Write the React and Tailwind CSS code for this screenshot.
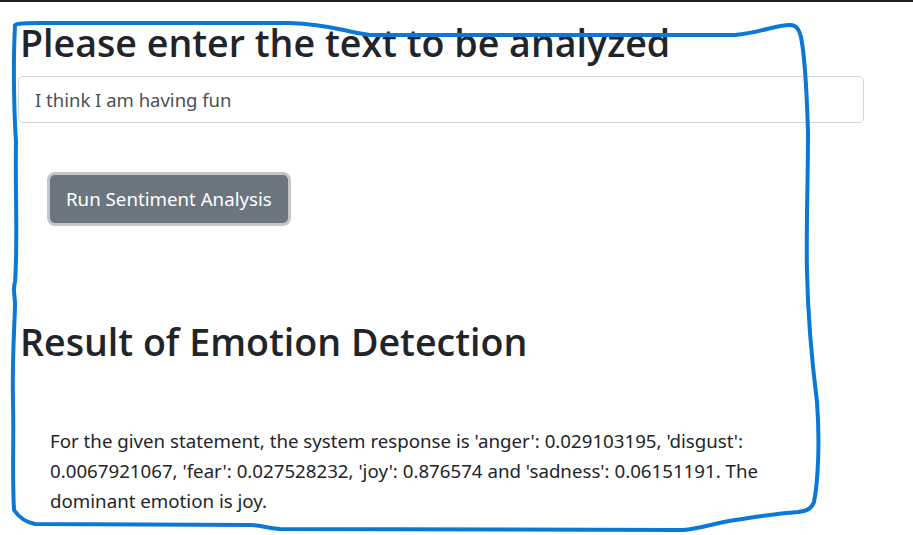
export default function App() {
    return (
        <div className="relative min-h-screen overflow-hidden bg-white border-t-2 border-[#1e1e1e] font-['Noto_Sans',sans-serif] text-[#212529]">
            <div className="px-[18px]">
                <h1 className="pt-[18px] pl-[2px] font-['Open_Sans',sans-serif] text-[37.6px] font-[550] leading-[46px]">
                    Please enter the text to be analyzed
                </h1>
                <input
                    type="text"
                    defaultValue="I think I am having fun"
                    className="mt-[10px] block h-[47px] w-[846px] rounded-[5px] border border-[#ced4da] px-[16px] text-[18.5px] text-[#495057] outline-none"
                />
                <div className="pt-[52px] pl-[32px]">
                    <button className="h-[48px] rounded-[5px] bg-[#6c757d] px-[16px] text-[18.7px] text-white ring-[3px] ring-[#c3c7cb]">
                        Run Sentiment Analysis
                    </button>
                </div>
                <h2 className="mt-[96px] pl-[2px] font-['Open_Sans',sans-serif] text-[37.6px] font-[550] leading-[46px]">
                    Result of Emotion Detection
                </h2>
                <p className="mt-[61px] pl-[32px] text-[18.7px] leading-[30px] whitespace-nowrap">
                    For the given statement, the system response is 'anger': 0.029103195, 'disgust':
                    <br />
                    0.0067921067, 'fear': 0.027528232, 'joy': 0.876574 and 'sadness': 0.06151191. The
                    <br />
                    dominant emotion is joy.
                </p>
            </div>
            <svg
                className="pointer-events-none absolute inset-0"
                width="913"
                height="535"
                viewBox="0 0 913 535"
                fill="none"
            >
                <path
                    d="M15,24 C14,22 20,21 40,21 L290,21 C330,22 345,30 370,33 L735,33 C760,31 775,23 790,23 C797,23 799,28 801,35 C806,60 807,100 808,130 C808,180 806,230 807,270 C808,320 812,360 817,400 C820,440 818,480 814,500 C811,508 805,509 798,510 C770,512 750,516 735,518 C710,522 700,527 683,528 L280,527 C265,526 262,523 250,523 L35,522 C25,520 18,514 14,508 C12,470 14,440 13,400 C12,350 15,320 15,300 C14,290 13,285 15,280 C18,240 15,190 16,140 C14,110 13,60 15,24 Z"
                    stroke="#0a78d6"
                    strokeWidth="4"
                    strokeLinejoin="round"
                    strokeLinecap="round"
                />
            </svg>
        </div>
    )
}
